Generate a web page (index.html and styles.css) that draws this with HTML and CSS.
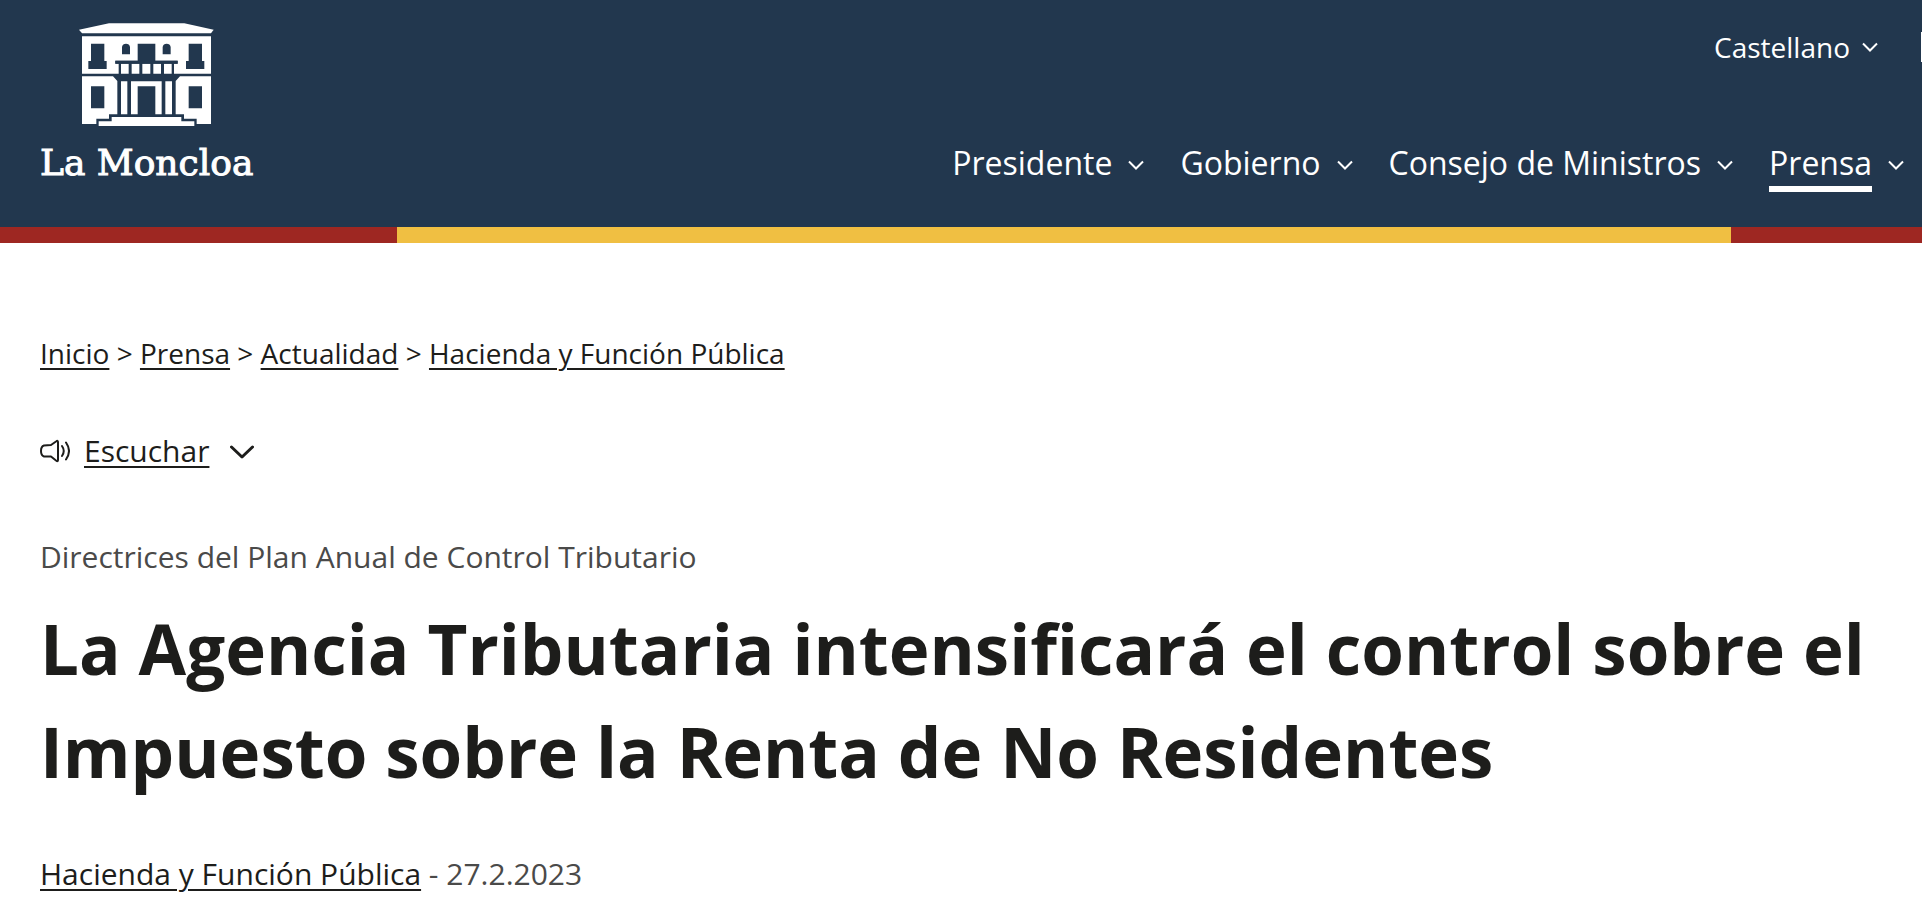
FILE: index.html
```html
<!DOCTYPE html>
<html lang="es">
<head>
<meta charset="utf-8">
<meta name="viewport" content="width=device-width, initial-scale=1">
<title>La Moncloa</title>
<link rel="stylesheet" href="styles.css">
</head>
<body>
<header class="header">
  <a class="logo" href="#">
    <svg class="logo-building" viewBox="148 38 405 310" aria-hidden="true">
      <path d="M148 58 238 39H464L552 58 544 69H157Z"/>
      <path fill-rule="evenodd" d="M157 78H544V190H433V160H444V151H377V100H324V151H257V160H267V190H157ZM184 100V152H176V176H231V152H224V100ZM477 100V152H469V176H524V152H517V100ZM277 132V110Q279 100 289 100T301 110V132ZM399 132V110Q401 100 411 100T423 110V132Z"/>
      <path d="M274 160H297V190H274ZM306 160H329V190H306ZM338 160H362V190H338ZM371 160H394V190H371ZM403 160H426V190H403Z"/>
      <path fill-rule="evenodd" d="M157 198H250L263 212V312H238V325H200V341H157ZM184 228V294H224V228Z"/>
      <path fill-rule="evenodd" d="M544 198H451L438 212V312H463V325H501V341H544ZM477 228V294H517V228Z"/>
      <path d="M274 213H293V312H274ZM407 213H427V312H407ZM304 213H396V312H377V228H324V312H304Z"/>
      <path d="M246 320H455V333H494V348H207V333H246Z"/>
      <path class="logo-gap" d="M257 151H444V160H257Z"/>
    </svg>
    <span class="logo-name">La Moncloa</span>
  </a>
  <div class="menus">
    <div class="utility">
      <button class="language" type="button">Castellano
        <svg class="chevron" viewBox="0 0 16 10" aria-hidden="true"><path d="M1 1.500 8 8.500 15 1.500"/></svg>
      </button>
      <span class="utility-edge"></span>
    </div>
    <nav class="nav" aria-label="Principal">
      <a class="nav-item" href="#"><span class="nav-label">Presidente</span><svg class="chevron" viewBox="0 0 16 10" aria-hidden="true"><path d="M1 1.500 8 8.500 15 1.500"/></svg></a>
      <a class="nav-item" href="#"><span class="nav-label">Gobierno</span><svg class="chevron" viewBox="0 0 16 10" aria-hidden="true"><path d="M1 1.500 8 8.500 15 1.500"/></svg></a>
      <a class="nav-item" href="#"><span class="nav-label">Consejo de Ministros</span><svg class="chevron" viewBox="0 0 16 10" aria-hidden="true"><path d="M1 1.500 8 8.500 15 1.500"/></svg></a>
      <a class="nav-item" href="#" aria-current="true"><span class="nav-label nav-label-current">Prensa</span><svg class="chevron" viewBox="0 0 16 10" aria-hidden="true"><path d="M1 1.500 8 8.500 15 1.500"/></svg></a>
    </nav>
  </div>
</header>
<div class="flag"></div>
<main class="page">
  <nav class="breadcrumb" aria-label="Ruta">
    <a href="#">Inicio</a> &gt; <a href="#">Prensa</a> &gt; <a href="#">Actualidad</a> &gt; <a href="#">Hacienda y Función Pública</a>
  </nav>
  <div class="listen">
    <svg class="speaker" viewBox="0 0 30 24" aria-hidden="true"><path d="M11 6 16 2.500Q18 1 18 3V21Q18 23 16 21.500L11 17.500H4Q1 16.500 1 12T4 6.500ZM22 7Q25.500 12 22 17M26 3.500Q32 12 26 20.500"/></svg>
    <a class="listen-link" href="#">Escuchar</a>
    <button class="listen-toggle" type="button" aria-label="Opciones de escucha">
      <svg class="listen-chevron" viewBox="0 0 24 14" aria-hidden="true"><path d="M1.500 2 12 12 22.500 2"/></svg>
    </button>
  </div>
  <p class="kicker">Directrices del Plan Anual de Control Tributario</p>
  <h1 class="title">La Agencia Tributaria intensificará el control sobre el Impuesto sobre la Renta de No Residentes</h1>
  <p class="meta"><a href="#">Hacienda y Función Pública</a> - 27.2.2023</p>
</main>
</body>
</html>
```

FILE: styles.css
```css
* { box-sizing: border-box; }

body {
  margin: 0;
  background: #fff;
  color: #1d1d1b;
  font-family: "Open Sans", "Noto Sans", sans-serif;
  font-size: 30px;
  line-height: 40px;
}

a { color: inherit; text-underline-offset: 4px; text-decoration-thickness: 2px; }
button { margin: 0; padding: 0; border: 0; background: none; color: inherit; font: inherit; cursor: pointer; }
svg { display: block; flex: none; }

.header {
  display: flex;
  justify-content: space-between;
  min-height: 227px;
  background: #22374e;
  color: #fff;
}

.logo {
  display: flex;
  flex-direction: column;
  align-items: center;
  gap: 17px;
  padding: 23px 0 0 40px;
  text-decoration: none;
}
.logo-building { width: 135px; fill: #fff; }
.logo-gap { fill: #22374e; }
.logo-name { font-family: "DejaVu Serif", serif; font-size: 36px; white-space: nowrap; -webkit-text-stroke: 1px #fff; }

.menus { display: flex; flex-direction: column; align-items: flex-end; gap: 76px; padding-top: 27px; }
.utility { display: flex; align-items: center; gap: 43px; }
.language { display: flex; align-items: center; gap: 12px; font-size: 28px; }
.utility-edge { width: 1px; height: 30px; background: #fff; }

.nav { display: flex; gap: 36px; padding-right: 18px; font-size: 32px; }
.nav-item { display: flex; align-items: center; gap: 16px; text-decoration: none; white-space: nowrap; }
.nav-label { padding-bottom: 3px; border-bottom: 6px solid transparent; }
.nav-label-current { border-bottom-color: #fff; }
.chevron { width: 16px; fill: none; stroke: #fff; stroke-width: 2; }
.nav .chevron { margin-bottom: 6px; }

.flag {
  height: 16px;
  background: linear-gradient(90deg, #9e2722 20.650%, #f0bf42 20.650% 90.060%, #9e2722 90.060%);
}

.page { padding: 90px 40px 0; }
.breadcrumb { font-size: 28px; }

.listen { display: flex; align-items: center; margin-top: 58px; }
.speaker { width: 30px; margin-right: 14px; fill: none; stroke: #1d1d1b; stroke-width: 2; stroke-linejoin: round; stroke-linecap: round; }
.listen-toggle { margin-left: 21px; padding-top: 2px; }
.listen-chevron { width: 24px; fill: none; stroke: #1d1d1b; stroke-width: 3; stroke-linecap: round; stroke-linejoin: round; }

.kicker { margin: 66px 0 0; color: #4a4a49; }
.title { margin: 20px 0 0; font-size: 69px; line-height: 103px; }
.meta { margin: 51px 0 0; color: #4a4a49; }
.meta a { color: #1d1d1b; }
```
